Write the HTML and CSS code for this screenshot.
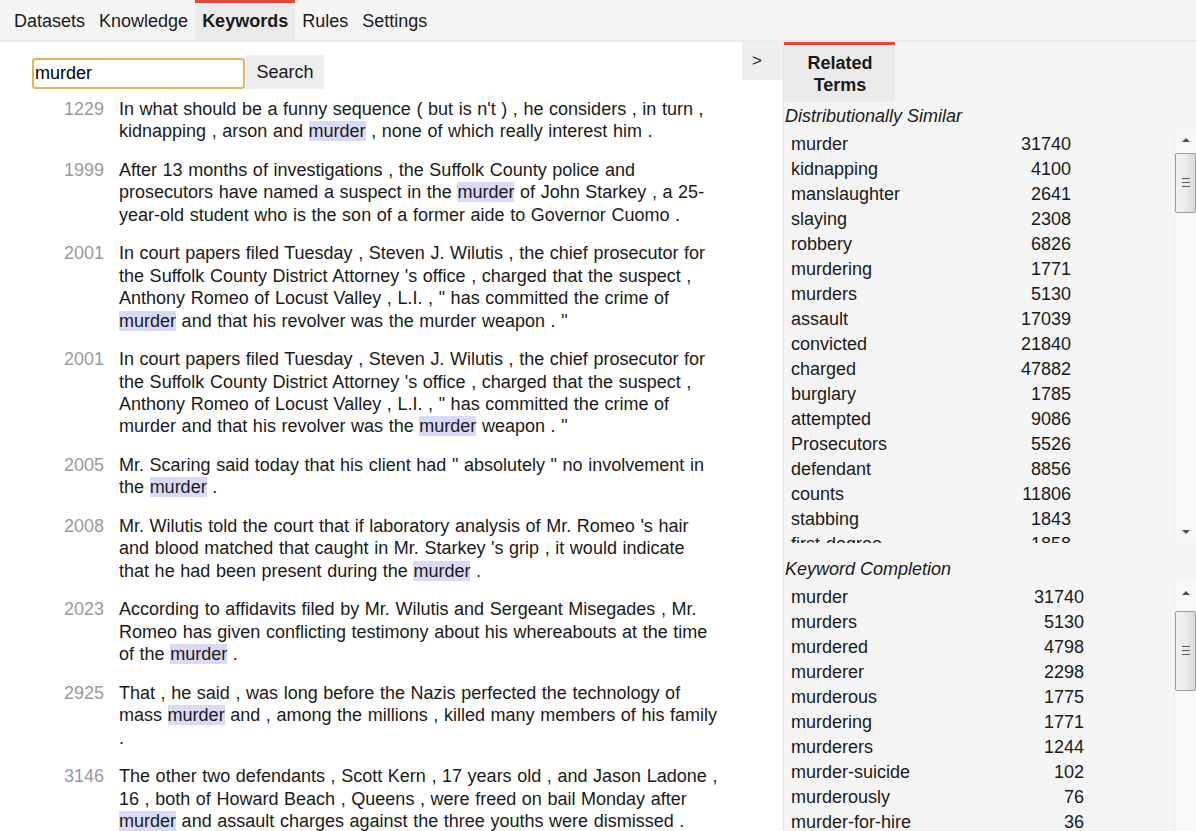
FILE: index.html
```html
<!DOCTYPE html>
<html>
<head>
<meta charset="utf-8">
<link rel="stylesheet" href="styles.css">
</head>
<body>
<div class="topbar">
  <div class="tab">Datasets</div>
  <div class="tab">Knowledge</div>
  <div class="tab active">Keywords</div>
  <div class="tab">Rules</div>
  <div class="tab">Settings</div>
</div>
<div class="main">
  <div class="left">
    <div class="search-row">
      <input class="search-input" type="text" value="murder">
      <button class="search-btn">Search</button>
    </div>
    <div class="results">
      <div class="result"><div class="rid">1229</div><div class="rtext">In what should be a funny sequence ( but is n't ) , he considers , in turn , kidnapping , arson and <span class="hl">murder</span> , none of which really interest him .</div></div>
      <div class="result"><div class="rid">1999</div><div class="rtext">After 13 months of investigations , the Suffolk County police and prosecutors have named a suspect in the <span class="hl">murder</span> of John Starkey , a 25-year-old student who is the son of a former aide to Governor Cuomo .</div></div>
      <div class="result"><div class="rid">2001</div><div class="rtext">In court papers filed Tuesday , Steven J. Wilutis , the chief prosecutor for the Suffolk County District Attorney 's office , charged that the suspect , Anthony Romeo of Locust Valley , L.I. , " has committed the crime of <span class="hl">murder</span> and that his revolver was the murder weapon . "</div></div>
      <div class="result"><div class="rid">2001</div><div class="rtext">In court papers filed Tuesday , Steven J. Wilutis , the chief prosecutor for the Suffolk County District Attorney 's office , charged that the suspect , Anthony Romeo of Locust Valley , L.I. , " has committed the crime of murder and that his revolver was the <span class="hl">murder</span> weapon . "</div></div>
      <div class="result"><div class="rid">2005</div><div class="rtext">Mr. Scaring said today that his client had " absolutely " no involvement in the <span class="hl">murder</span> .</div></div>
      <div class="result"><div class="rid">2008</div><div class="rtext">Mr. Wilutis told the court that if laboratory analysis of Mr. Romeo 's hair and blood matched that caught in Mr. Starkey 's grip , it would indicate that he had been present during the <span class="hl">murder</span> .</div></div>
      <div class="result"><div class="rid">2023</div><div class="rtext">According to affidavits filed by Mr. Wilutis and Sergeant Misegades , Mr. Romeo has given conflicting testimony about his whereabouts at the time of the <span class="hl">murder</span> .</div></div>
      <div class="result"><div class="rid">2925</div><div class="rtext">That , he said , was long before the Nazis perfected the technology of mass <span class="hl">murder</span> and , among the millions , killed many members of his family .</div></div>
      <div class="result"><div class="rid">3146</div><div class="rtext">The other two defendants , Scott Kern , 17 years old , and Jason Ladone , 16 , both of Howard Beach , Queens , were freed on bail Monday after <span class="hl">murder</span> and assault charges against the three youths were dismissed .</div></div>
    </div>
  </div>
  <div class="toggle-col"><div class="toggle">&gt;</div></div>
  <div class="right">
    <div class="rtabs"><div class="rtab">Related<br>Terms</div></div>
    <div class="section-title">Distributionally Similar</div>
    <div class="listbox listbox-ds">
      <div class="rows rows-ds">
        <div class="row"><span class="term">murder</span><span class="count">31740</span></div>
        <div class="row"><span class="term">kidnapping</span><span class="count">4100</span></div>
        <div class="row"><span class="term">manslaughter</span><span class="count">2641</span></div>
        <div class="row"><span class="term">slaying</span><span class="count">2308</span></div>
        <div class="row"><span class="term">robbery</span><span class="count">6826</span></div>
        <div class="row"><span class="term">murdering</span><span class="count">1771</span></div>
        <div class="row"><span class="term">murders</span><span class="count">5130</span></div>
        <div class="row"><span class="term">assault</span><span class="count">17039</span></div>
        <div class="row"><span class="term">convicted</span><span class="count">21840</span></div>
        <div class="row"><span class="term">charged</span><span class="count">47882</span></div>
        <div class="row"><span class="term">burglary</span><span class="count">1785</span></div>
        <div class="row"><span class="term">attempted</span><span class="count">9086</span></div>
        <div class="row"><span class="term">Prosecutors</span><span class="count">5526</span></div>
        <div class="row"><span class="term">defendant</span><span class="count">8856</span></div>
        <div class="row"><span class="term">counts</span><span class="count">11806</span></div>
        <div class="row"><span class="term">stabbing</span><span class="count">1843</span></div>
        <div class="row"><span class="term">first-degree</span><span class="count">1858</span></div>
        <div class="row"><span class="term">homicide</span><span class="count">3312</span></div>
      </div>
      <div class="sbar sbar-ds">
        <div class="sbtn"><span class="arr-up"></span></div>
        <div class="thumb"><span class="grip"></span><span class="grip"></span><span class="grip"></span></div>
        <div class="track"></div>
        <div class="sbtn"><span class="arr-down"></span></div>
      </div>
    </div>
    <div class="section-title section-title-kc">Keyword Completion</div>
    <div class="listbox listbox-kc">
      <div class="rows rows-kc">
        <div class="row"><span class="term">murder</span><span class="count">31740</span></div>
        <div class="row"><span class="term">murders</span><span class="count">5130</span></div>
        <div class="row"><span class="term">murdered</span><span class="count">4798</span></div>
        <div class="row"><span class="term">murderer</span><span class="count">2298</span></div>
        <div class="row"><span class="term">murderous</span><span class="count">1775</span></div>
        <div class="row"><span class="term">murdering</span><span class="count">1771</span></div>
        <div class="row"><span class="term">murderers</span><span class="count">1244</span></div>
        <div class="row"><span class="term">murder-suicide</span><span class="count">102</span></div>
        <div class="row"><span class="term">murderously</span><span class="count">76</span></div>
        <div class="row"><span class="term">murder-for-hire</span><span class="count">36</span></div>
        <div class="row"><span class="term">murdereth</span><span class="count">2</span></div>
      </div>
      <div class="sbar sbar-kc">
        <div class="sbtn"><span class="arr-up"></span></div>
        <div class="thumb"><span class="grip"></span><span class="grip"></span><span class="grip"></span></div>
        <div class="track"></div>
        <div class="sbtn"><span class="arr-down"></span></div>
      </div>
    </div>
  </div>
</div>
</body>
</html>
```
FILE: styles.css
```css
html, body {
  margin: 0;
  padding: 0;
  height: 100%;
  overflow: hidden;
}
body {
  font-family: "Liberation Sans", Arial, sans-serif;
  font-size: 18px;
  color: #1a1a1a;
  background: #ffffff;
}
.topbar {
  display: flex;
  height: 40px;
  background: #f5f5f5;
  border-bottom: 2px solid #ebebeb;
  padding-left: 7px;
}
.tab {
  box-sizing: border-box;
  height: 40px;
  padding: 3px 7px 0 7px;
  line-height: 36px;
  color: #1a1a1a;
}
.tab.active {
  background: #ebebeb;
  border-top: 3px solid #dd4b39;
  padding-top: 0;
  font-weight: bold;
}
.main {
  display: flex;
  height: calc(100% - 42px);
}
.left {
  width: 741px;
  flex: none;
  overflow: hidden;
}
.search-row {
  display: flex;
  align-items: flex-end;
  padding: 13px 0 0 32px;
  gap: 1px;
}
.search-input {
  box-sizing: border-box;
  width: 213px;
  height: 31px;
  border: 2px solid #e0b461;
  border-radius: 3px;
  box-shadow: inset 0 0 1px #f3d9a8;
  padding: 0 1px;
  font-family: "Liberation Sans", Arial, sans-serif;
  font-size: 18px;
  color: #000;
  outline: none;
  background: #fff;
}
.search-btn {
  box-sizing: border-box;
  width: 78px;
  height: 34px;
  border: none;
  background: #eeeeee;
  font-family: "Liberation Sans", Arial, sans-serif;
  font-size: 18px;
  color: #1a1a1a;
  padding: 1px 0 0 0;
}
.results {
  margin-top: 9px;
}
.result {
  display: flex;
  gap: 15px;
  margin-bottom: 16.2px;
  line-height: 22.4px;
}
.rid {
  width: 104px;
  flex: none;
  text-align: right;
  color: #9a9a9a;
}
.rtext {
  width: 599.5px;
  flex: none;
  word-spacing: 0.6px;
}
.hl {
  background: #dadaf7;
}
.toggle-col {
  width: 42px;
  flex: none;
  background: #ffffff;
}
.toggle {
  height: 38px;
  line-height: 38px;
  background: #eeeeee;
  padding-left: 10px;
  font-size: 17px;
  margin-left: 1px;
}
.right {
  flex: 1;
  background: #f5f5f5;
  border-left: 1px solid #e4e4e4;
  overflow: hidden;
}
.rtabs {
  display: flex;
}
.rtab {
  box-sizing: border-box;
  width: 111px;
  height: 60px;
  background: #ebebeb;
  border-top: 3px solid #dd4b39;
  padding-top: 7px;
  padding-left: 1px;
  text-align: center;
  font-weight: bold;
  line-height: 22px;
}
.section-title {
  font-style: italic;
  line-height: 22px;
  margin-top: 3px;
  padding-left: 1px;
}
.section-title-kc {
  margin-top: 15px;
}
.listbox {
  display: flex;
  margin-top: 2px;
}
.listbox-ds {
  height: 414px;
}
.listbox-kc {
  height: 330px;
}
.rows {
  flex: 1;
  overflow: hidden;
  padding-top: 3px;
}
.row {
  display: flex;
  height: 25px;
  line-height: 25px;
  padding-left: 7px;
}
.term {
  width: 200px;
  flex: none;
}
.count {
  flex: none;
  text-align: right;
}
.rows-ds .count {
  width: 80px;
}
.rows-kc .count {
  width: 93px;
}
.sbar {
  width: 22px;
  flex: none;
  display: flex;
  flex-direction: column;
  background: #f8f8f8;
  border-left: 1px solid #ececec;
  box-sizing: border-box;
}
.sbtn {
  height: 22px;
  flex: none;
  display: flex;
  align-items: center;
  justify-content: center;
}
.arr-up {
  width: 0;
  height: 0;
  border-left: 4px solid transparent;
  border-right: 4px solid transparent;
  border-bottom: 4px solid #505050;
}
.arr-down {
  width: 0;
  height: 0;
  border-left: 4px solid transparent;
  border-right: 4px solid transparent;
  border-top: 4px solid #505050;
}
.thumb {
  box-sizing: border-box;
  flex: none;
  margin: 2px 0 0 0;
  border: 1px solid #9c9c9c;
  border-radius: 2px;
  background: linear-gradient(to right, #f4f4f4 0%, #ececec 45%, #d9d9d9 100%);
  display: flex;
  flex-direction: column;
  align-items: center;
  justify-content: center;
  gap: 2px;
}
.sbar-ds .thumb {
  height: 60px;
}
.sbar-kc .thumb {
  height: 80px;
  margin-top: 7px;
}
.grip {
  display: block;
  width: 8px;
  height: 1px;
  background: #606060;
  border-bottom: 1px solid #e8e8e8;
}
.track {
  flex: 1;
}
```
